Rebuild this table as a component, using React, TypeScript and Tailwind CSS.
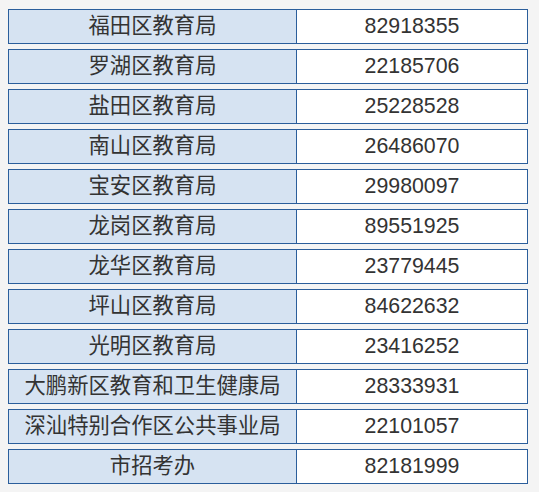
const rows: [string, string][] = [
  ["福田区教育局", "82918355"],
  ["罗湖区教育局", "22185706"],
  ["盐田区教育局", "25228528"],
  ["南山区教育局", "26486070"],
  ["宝安区教育局", "29980097"],
  ["龙岗区教育局", "89551925"],
  ["龙华区教育局", "23779445"],
  ["坪山区教育局", "84622632"],
  ["光明区教育局", "23416252"],
  ["大鹏新区教育和卫生健康局", "28333931"],
  ["深汕特别合作区公共事业局", "22101057"],
  ["市招考办", "82181999"],
];

export default function App() {
  return (
    <div
      className="w-[539px] h-[492px] bg-[#f4f4f4] pl-[8px] pt-[9px] text-[#333333]"
      style={{ fontFamily: '"Liberation Sans", Arial, "Noto Sans CJK SC", sans-serif' }}
    >
      <div className="flex flex-col gap-[5px] w-[520px]">
        {rows.map(([name, phone]) => (
          <div key={name} className="flex h-[35px] border border-[#2b5e9b]">
            <div className="w-[287px] flex items-center justify-center bg-[#d6e3f2] text-[21.33px] leading-none">
              {name}
            </div>
            <div className="flex-1 flex items-center justify-center bg-white border-l border-[#2b5e9b] text-[21.33px] leading-none">
              {phone}
            </div>
          </div>
        ))}
      </div>
    </div>
  );
}
